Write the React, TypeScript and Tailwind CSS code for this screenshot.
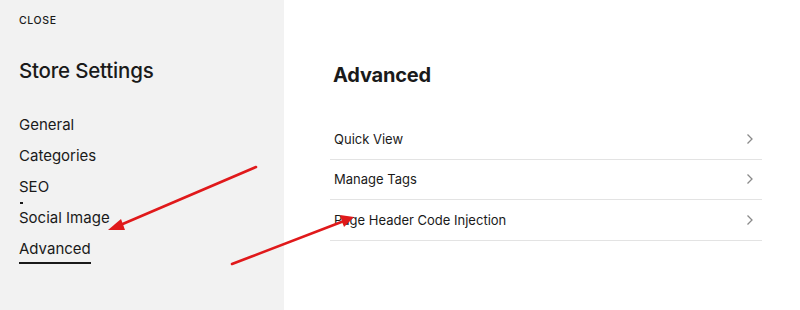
import React from "react";

const navItems = ["General", "Categories", "SEO", "Social Image", "Advanced"];
const rows = ["Quick View", "Manage Tags", "Page Header Code Injection"];

function Chevron() {
  return (
    <svg width="8" height="12" viewBox="0 0 8 12" fill="none">
      <path d="M1.5 1.5 L6 6 L1.5 10.5" stroke="#8a8a8a" strokeWidth="1.3" />
    </svg>
  );
}

export default function App() {
  return (
    <div
      className="relative flex h-[310px] w-[800px] overflow-hidden bg-white text-[#1a1a1a]"
      style={{ fontFamily: "Inter, 'Liberation Sans', sans-serif" }}
    >
      <aside className="flex w-[284px] shrink-0 flex-col bg-[#f2f2f2] pl-[19px] pt-[14px]">
        <div className="text-[10.5px] font-medium tracking-[0.06em] leading-[13px]">CLOSE</div>
        <h1 className="mt-[32px] text-[20.5px] font-medium leading-[24px] tracking-[-0.01em]">Store Settings</h1>
        <nav className="mt-[32px] flex flex-col">
          {navItems.map((item) => (
            <div key={item} className="relative h-[31px] text-[15px] leading-[20px]">
              {item === "Advanced" ? (
                <span className="inline-block border-b-2 border-[#1a1a1a] pb-[3px]">{item}</span>
              ) : (
                <span>{item}</span>
              )}
              {item === "SEO" && (
                <span className="absolute left-[1px] top-[25px] h-[2px] w-[3px] bg-[#1a1a1a]" />
              )}
            </div>
          ))}
        </nav>
      </aside>
      <main className="flex-1 pl-[46px] pr-[38px] pt-[62px]">
        <h2 className="pl-[3px] text-[20px] font-bold leading-[26px] tracking-[-0.01em]">Advanced</h2>
        <div className="mt-[31px] flex flex-col">
          {rows.map((r) => (
            <div
              key={r}
              className="flex h-[40.5px] items-center justify-between border-b border-[#e3e3e3] pl-[4px] pr-[8px]"
            >
              <span className="text-[13px] leading-[18px]">{r}</span>
              <Chevron />
            </div>
          ))}
        </div>
      </main>
      <svg className="pointer-events-none absolute left-0 top-0" width="800" height="310">
        <line x1="256" y1="167" x2="118" y2="226" stroke="#e0191b" strokeWidth="2.6" strokeLinecap="round" />
        <polygon points="108,230 121,219 125,230" fill="#e0191b" />
        <line x1="232" y1="264" x2="344" y2="221" stroke="#e0191b" strokeWidth="2.6" strokeLinecap="round" />
        <polygon points="354,217 340,215 344,227" fill="#e0191b" />
      </svg>
    </div>
  );
}
